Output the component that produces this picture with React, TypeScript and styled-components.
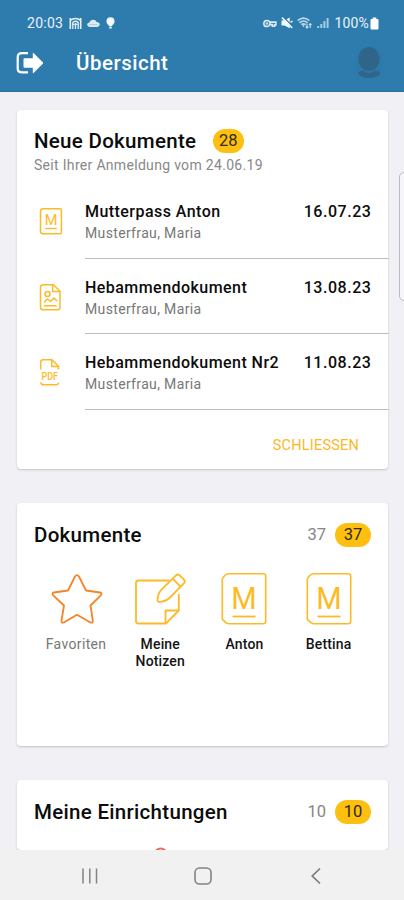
import React from 'react';
import styled, { createGlobalStyle } from 'styled-components';

const AMBER = '#fcbb26';

const GlobalStyle = createGlobalStyle`
  * { box-sizing: border-box; }
  body { margin: 0; background: #f0f0f5; font-family: Roboto, sans-serif; color: #0c0c0c; }
`;

const Screen = styled.div`
  position: relative;
  display: flex;
  flex-direction: column;
  width: 404px;
  height: 900px;
  overflow: hidden;
  background: #f0f0f5;
`;

const Header = styled.header`
  flex: none;
  height: 92px;
  background: #2e7cae;
  border-bottom: 1px solid #24709f;
  color: #fff;
`;

const StatusBar = styled.div`
  display: flex;
  align-items: center;
  justify-content: space-between;
  height: 33px;
  padding: 13px 24px 0 27px;
  font-size: 14px;
  line-height: 20px;
  color: #e9f3fa;
`;

const StatusGroup = styled.div<{ $gap: number }>`
  display: flex;
  align-items: center;
  gap: ${(p) => p.$gap}px;
  svg { display: block; }
`;

const Clock = styled.span`
  letter-spacing: 0.28px;
  margin-right: 1px;
`;

const Battery = styled.span`
  display: flex;
  align-items: center;
  gap: 1px;
  margin-left: 2px;
  letter-spacing: 0.15px;
`;

const AppBar = styled.div`
  display: flex;
  align-items: center;
  height: 58px;
  padding: 2px 20px 0 16px;
  svg { display: block; }
`;

const PageTitle = styled.h1`
  flex: 1;
  margin: 0 0 0 32px;
  font-size: 20.5px;
  font-weight: 500;
  line-height: 26px;
  letter-spacing: 0.5px;
`;

const Content = styled.main`
  flex: 1;
  min-height: 0;
  overflow: hidden;
  display: flex;
  flex-direction: column;
  gap: 34px;
  padding: 18px 16px 0 17px;
`;

const Card = styled.section<{ $height: number }>`
  flex: none;
  display: flex;
  flex-direction: column;
  height: ${(p) => p.$height}px;
  background: #fff;
  border-radius: 4px;
  box-shadow: 0 1px 2px rgba(60, 60, 70, 0.25);
`;

const CardHeader = styled.div<{ $top: number }>`
  display: flex;
  align-items: center;
  height: 25px;
  margin-top: ${(p) => p.$top}px;
  padding: 0 17px;
`;

const CardTitle = styled.h2<{ $grow?: boolean }>`
  margin: 0;
  flex: ${(p) => (p.$grow ? 1 : 'none')};
  font-size: 20.5px;
  font-weight: 500;
  line-height: 24px;
  letter-spacing: 0.3px;
  white-space: nowrap;
`;

const Badge = styled.span<{ $width: number }>`
  display: flex;
  align-items: center;
  justify-content: center;
  width: ${(p) => p.$width}px;
  height: 24px;
  border-radius: 12px;
  background: #fdc011;
  color: #33290d;
  font-size: 16.5px;
  line-height: 24px;
`;

const TitleBadge = styled(Badge)`
  margin-left: 16.5px;
`;

const Count = styled.span`
  margin-right: 9px;
  color: #858585;
  font-size: 16.5px;
  line-height: 24px;
`;

const Subtitle = styled.p`
  margin: 3px 17px 0;
  color: #888;
  font-size: 14px;
  line-height: 18px;
  letter-spacing: 0.31px;
`;

const DocumentList = styled.div`
  display: flex;
  flex-direction: column;
  margin-top: 9px;
`;

const DocumentRow = styled.div`
  display: flex;
  height: 75.6px;
`;

const RowIcon = styled.div`
  display: flex;
  flex: none;
  width: 68px;
  padding: 24px 0 0 22px;
  svg { display: block; }
`;

const RowBody = styled.div`
  flex: 1;
  padding: 18px 17.5px 0 0;
  margin-right: -1px;
  border-bottom: 1px solid #bdbdbd;
`;

const RowTop = styled.div`
  display: flex;
  justify-content: space-between;
  font-size: 16px;
  font-weight: 500;
  line-height: 22px;
  white-space: nowrap;
`;

const DocumentName = styled.span`
  letter-spacing: 0.45px;
`;

const DocumentDate = styled.span`
  letter-spacing: 0.55px;
`;

const Owner = styled.div`
  color: #777;
  font-size: 14px;
  line-height: 20px;
  letter-spacing: 0.35px;
`;

const CloseButton = styled.button`
  align-self: flex-end;
  margin: 25px 29px 0 0;
  padding: 0;
  border: 0;
  background: none;
  color: #fbb91f;
  font: 400 14.5px/22px Roboto, sans-serif;
  letter-spacing: 0.2px;
`;

const FolderGrid = styled.div`
  display: grid;
  grid-template-columns: repeat(4, 84.2px);
  margin: 25px 0 0 17px;
`;

const Folder = styled.div<{ $muted?: boolean }>`
  display: flex;
  flex-direction: column;
  align-items: center;
  color: ${(p) => (p.$muted ? '#777' : '#141414')};
  font-size: 14px;
  font-weight: ${(p) => (p.$muted ? 400 : 500)};
  line-height: 17px;
  letter-spacing: ${(p) => (p.$muted ? 0.35 : 0.15)}px;
  text-align: center;
  svg { display: block; margin-bottom: 10px; }
`;

const FolderLabel = styled.span`
  width: 62px;
`;

const ClippedFacility = styled.div`
  height: 3px;
  margin: auto 0 0 136px;
  overflow: hidden;
  svg { display: block; }
`;

const NavBar = styled.nav`
  flex: none;
  display: grid;
  grid-template-columns: 113px 113px 113px;
  justify-content: center;
  justify-items: center;
  align-items: center;
  height: 50px;
  padding: 2px 0 0 2px;
  background: #f1f1f1;
  svg { display: block; }
`;

const EdgeHandle = styled.div`
  position: absolute;
  top: 172px;
  right: -6px;
  width: 11px;
  height: 129px;
  border: 1px solid #b9b9be;
  border-radius: 5px;
  background: #f6f6fa;
`;

const LogoutIcon = () => (
  <svg width="28" height="24" viewBox="0 0 28 24">
    <path d="M12 2.200H6Q1.700 2.200 1.700 6.500v11Q1.700 21.400 6 21.400h6" fill="none" stroke="#fff" strokeWidth="2.200" />
    <path d="M8.500 7.200h8.300V2.400q0-1.100 1-.2l9 9q.7.8 0 1.600l-9 9q-1 .9-1-.2v-4.800H8.500q-1 0-1-1V8.200q0-1 1-1z" fill="#fff" />
  </svg>
);

const AvatarIcon = () => (
  <svg width="30" height="36" viewBox="0 0 30 36">
    <ellipse cx="15" cy="17" rx="14" ry="16" fill="#2a6e9b" opacity=".2" />
    <ellipse cx="15" cy="14" rx="10.500" ry="12" fill="#306589" />
    <path d="M4 29q1-3.500 5-3.300 6 4.500 12 0 4.500 0 5.500 3.300Q22 33 15 33T4 29z" fill="#306589" />
  </svg>
);

const StadiumIcon = () => (
  <svg width="13" height="13" viewBox="0 0 13 13" fill="none" stroke="#e4f0f8">
    <path d="M1.300 12V1M11.700 12V1M1 3.500Q6.500-.5 12 3.500" strokeWidth="1.600" />
    <path d="M3.800 12V5.500Q6.500 3 9.200 5.500V12M6.500 6v6" strokeWidth="1.300" />
    <path d="M3.500 7.300h6" strokeWidth="1" />
  </svg>
);

const CloudIcon = () => (
  <svg width="13" height="9" viewBox="0 0 13 9">
    <path d="M2.500 8Q0 7.500.2 5.300.5 3.600 2.500 3.500 3.400.7 6.200.7 8.800.7 9.600 3q3 .2 3.200 2.600Q12.700 7.900 10 8z" fill="#dcebf4" />
    <path d="M2 5.700h8.500" stroke="#9bc3dd" strokeWidth=".8" />
  </svg>
);

const BulbIcon = () => (
  <svg width="11" height="12" viewBox="-1 0 11 12" fill="#f2f8fc">
    <circle cx="4.500" cy="4.300" r="4" />
    <path d="M2.700 7h3.600v2H2.700zM3.300 9.500h2.400v2H3.300z" />
  </svg>
);

const KeyIcon = () => (
  <svg width="14" height="9" viewBox="0 0 15 9" fill="none" stroke="#dbeaf4" strokeWidth="1.700">
    <circle cx="4.200" cy="4.500" r="3.300" />
    <circle cx="4.200" cy="4.500" r=".5" />
    <path d="M7.300 3h6.500v3h-1.300v1.500H10V5.700H7.300" />
  </svg>
);

const MuteIcon = () => (
  <svg width="12" height="12" viewBox="0 0 12 12" fill="#f4f9fc">
    <path d="M.5 3.500h3L8.700.5V11.300L3.500 8.500h-3z" />
    <path d="M2.500.2 11.800 9.500" stroke="#2e7cae" strokeWidth="1.300" />
    <path d="M1 .6 11.300 11M9.500 5.500l2-1.500" stroke="#f4f9fc" strokeWidth="1.500" />
  </svg>
);

const WifiIcon = () => (
  <svg width="16" height="12" viewBox="0 0 16 12" fill="none" stroke="#bcd8e9" strokeWidth="1.600">
    <path d="M.7 3.700Q6.500-1.500 12.300 3.700M2.500 5.800q4-3.600 8 0M4.500 7.800q2-1.800 4 0" />
    <path d="M6.500 8v2M10 10.800V6.500M8.700 9.500l1.300 1.500 1.300-1.500M13.200 11V6.500M12 8l1.200-1.400L14.500 8" strokeWidth="1.200" />
  </svg>
);

const SignalIcon = () => (
  <svg width="12" height="12" viewBox="0 0 12 12" stroke="#a6cae0" strokeWidth="2">
    <path d="M1.200 11V9M4.300 11V7M7.400 11V4M10.600 11V1" />
  </svg>
);

const BatteryIcon = () => (
  <svg width="10" height="13" viewBox="0 0 10 13" fill="#fff">
    <path d="M2.700.5h3.600V2H7.500q1 0 1 1v8.500q0 1-1 1h-6q-1 0-1-1V3q0-1 1-1h1.200z" />
  </svg>
);

const MaternityIcon = ({ small = false }: { small?: boolean }) =>
  small ? (
    <svg width="25" height="29" viewBox="0 0 25 29" fill="none" stroke={AMBER}>
      <path d="M4 1.700h17q1.400 0 1.400 1.200v22.500q0 1.400-1.400 1.400H4q-2.500-.3-2.500-2.500V4.200Q1.500 2 4 1.700z" strokeWidth="1.500" />
      <text x="12" y="18.200" textAnchor="middle" fontFamily="Roboto, sans-serif" fontSize="14.500" fill={AMBER} stroke="none">M</text>
      <path d="M6.300 21.500h11.500" strokeWidth="1.400" />
    </svg>
  ) : (
    <svg width="48" height="54" viewBox="0 0 48 54" fill="none" stroke={AMBER}>
      <path d="M8.500 1.800H43q2.700 0 2.700 2.200v45.500q0 2.200-2.700 2.200H8.500Q5.500 51.200 2.300 47V7Q4.500 2.500 8.500 1.800z" strokeWidth="1.600" strokeLinejoin="round" />
      <text x="24" y="37" textAnchor="middle" fontFamily="Roboto, sans-serif" fontSize="31" fontWeight="400" textLength="25.500" lengthAdjust="spacingAndGlyphs" fill={AMBER} stroke="none">M</text>
      <path d="M12.500 44.500h23" strokeWidth="1.800" />
    </svg>
  );

const ImageFileIcon = () => (
  <svg width="24" height="29" viewBox="0 0 24 29" fill="none" stroke={AMBER} strokeWidth="1.500" strokeLinejoin="round">
    <path d="M4 1.700h10.500l6.500 6.500v16q0 2.600-3 2.600H4q-2.500 0-2.500-2.500V4.200Q1.500 1.700 4 1.700z" />
    <path d="M13.700 2v6.500H21" />
    <circle cx="8.500" cy="11" r="2.500" />
    <path d="m5 19.500 3.500-3.500 3 2.500 3.500-3.500 3 3M5 22.800h12.500" />
  </svg>
);

const PdfFileIcon = () => (
  <svg width="23" height="29" viewBox="0 0 23 29" fill="none" stroke={AMBER} strokeWidth="1.500" strokeLinejoin="round">
    <path d="M1.700 11.500V4.300q0-2.500 2.500-2.500H13l6.500 6.500v3.200M12.700 2v6.500h7M1.700 24.500q.5 2.300 3 2.300H17q2.300 0 2.600-2.300" />
    <text x="10.700" y="21.800" textAnchor="middle" fontFamily="Roboto, sans-serif" fontSize="10" fontWeight="500" textLength="16.500" lengthAdjust="spacingAndGlyphs" fill={AMBER} stroke="none">PDF</text>
  </svg>
);

const StarIcon = () => (
  <svg width="54" height="54" viewBox="-0.500 1 54 54" fill="none" stroke="#f68426" strokeWidth="1.800" strokeLinejoin="round">
    <path d="M25.500 5.500q2-2.800 4 0l7 14 14 2q2.500.6.800 2.800L41 34.500l2.300 15q.2 2.900-2.300 2L27.500 43.800l-13.200 7.700q-2.500.9-2.300-2L14.500 34.500 3.700 24.300q-1.700-2.200.8-2.800l14-2z" />
  </svg>
);

const NotesIcon = () => (
  <svg width="54" height="54" viewBox="0 0 54 54" fill="none" stroke={AMBER} strokeWidth="1.800" strokeLinejoin="round">
    <path d="M36.500 8.500H5.500Q3 8.500 3 11v38Q3 51.500 5.500 51.500H33L45.800 38.500V22" />
    <path d="M32.500 51.500V38.500h13" />
    <path d="M26.500 29.800q-2.200.3-2-2 .3-6.300 3.700-10L43 3.300q1.800-1.600 3.600 0l4.300 4.200q1.800 1.800.2 3.600L36.500 26q-4 3.600-10 3.800zM39.700 6.600l7.800 8" />
  </svg>
);

const FacilityTop = () => (
  <svg width="16" height="10" viewBox="0 0 16 10">
    <ellipse cx="7.700" cy="7" rx="6" ry="5.500" fill="none" stroke="#ef6959" strokeWidth="1.800" />
  </svg>
);

const documents = [
  { name: 'Mutterpass Anton', date: '16.07.23', icon: <MaternityIcon small /> },
  { name: 'Hebammendokument', date: '13.08.23', icon: <ImageFileIcon /> },
  { name: 'Hebammendokument Nr2', date: '11.08.23', icon: <PdfFileIcon /> },
];

const folders = [
  { name: 'Favoriten', icon: <StarIcon />, muted: true },
  { name: 'Meine Notizen', icon: <NotesIcon /> },
  { name: 'Anton', icon: <MaternityIcon /> },
  { name: 'Bettina', icon: <MaternityIcon /> },
];

export default function App() {
  return (
    <>
      <GlobalStyle />
      <Screen>
        <Header>
          <StatusBar>
            <StatusGroup $gap={5}>
              <Clock>20:03</Clock>
              <StadiumIcon />
              <CloudIcon />
              <BulbIcon />
            </StatusGroup>
            <StatusGroup $gap={4}>
              <KeyIcon />
              <MuteIcon />
              <WifiIcon />
              <SignalIcon />
              <Battery>100%<BatteryIcon /></Battery>
            </StatusGroup>
          </StatusBar>
          <AppBar>
            <LogoutIcon />
            <PageTitle>Übersicht</PageTitle>
            <AvatarIcon />
          </AppBar>
        </Header>

        <Content>
          <Card $height={359}>
            <CardHeader $top={18}>
              <CardTitle>Neue Dokumente</CardTitle>
              <TitleBadge $width={31}>28</TitleBadge>
            </CardHeader>
            <Subtitle>Seit Ihrer Anmeldung vom 24.06.19</Subtitle>
            <DocumentList>
              {documents.map((doc) => (
                <DocumentRow key={doc.name}>
                  <RowIcon>{doc.icon}</RowIcon>
                  <RowBody>
                    <RowTop>
                      <DocumentName>{doc.name}</DocumentName>
                      <DocumentDate>{doc.date}</DocumentDate>
                    </RowTop>
                    <Owner>Musterfrau, Maria</Owner>
                  </RowBody>
                </DocumentRow>
              ))}
            </DocumentList>
            <CloseButton>SCHLIESSEN</CloseButton>
          </Card>

          <Card $height={243.4}>
            <CardHeader $top={19}>
              <CardTitle $grow>Dokumente</CardTitle>
              <Count>37</Count>
              <Badge $width={36}>37</Badge>
            </CardHeader>
            <FolderGrid>
              {folders.map((folder) => (
                <Folder key={folder.name} $muted={folder.muted}>
                  {folder.icon}
                  <FolderLabel>{folder.name}</FolderLabel>
                </Folder>
              ))}
            </FolderGrid>
          </Card>

          <Card $height={69.6}>
            <CardHeader $top={19.5}>
              <CardTitle $grow>Meine Einrichtungen</CardTitle>
              <Count>10</Count>
              <Badge $width={36}>10</Badge>
            </CardHeader>
            <ClippedFacility><FacilityTop /></ClippedFacility>
          </Card>
        </Content>

        <NavBar>
          <svg width="18" height="16" viewBox="0 0 18 16" stroke="#838383" strokeWidth="1.500">
            <path d="M2 .5v15M8.800.5v15M15.500.5v15" />
          </svg>
          <svg width="18" height="18" viewBox="0 0 18 18" fill="none" stroke="#838383" strokeWidth="1.600">
            <rect x="1" y="1" width="16" height="16" rx="4.500" />
          </svg>
          <svg width="12" height="18" viewBox="0 0 12 18" fill="none" stroke="#777" strokeWidth="1.600">
            <path d="M10 1.500 2.200 9l7.800 7.500" />
          </svg>
        </NavBar>
        <EdgeHandle />
      </Screen>
    </>
  );
}
